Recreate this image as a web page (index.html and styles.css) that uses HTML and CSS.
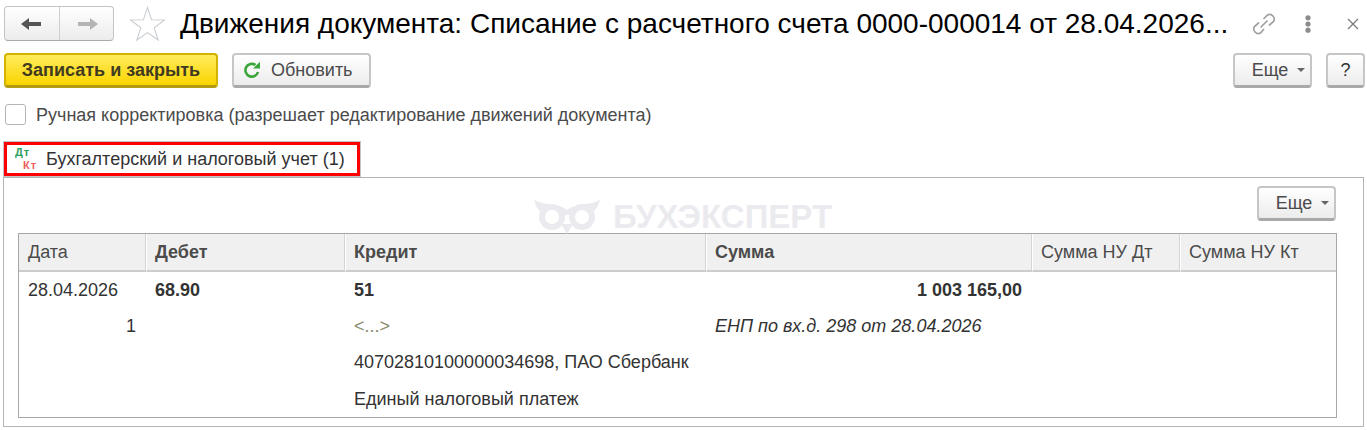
FILE: index.html
```html
<!DOCTYPE html>
<html lang="ru">
<head>
<meta charset="utf-8">
<title>Движения документа</title>
<link rel="stylesheet" href="styles.css">
</head>
<body>

<div class="titlebar">
  <div class="navgroup">
    <div class="navbtn navbtn-first">
      <svg width="24" height="16" viewBox="0 0 24 16"><path d="M1 8 L9 2 V6 H21 V10 H9 V14 Z" fill="#555"/></svg>
    </div>
    <div class="navbtn">
      <svg width="24" height="16" viewBox="0 0 24 16"><path d="M23 8 L15 2 V6 H3 V10 H15 V14 Z" fill="#b4b4b4"/></svg>
    </div>
  </div>
  <svg class="star" width="37" height="36" viewBox="0 0 37 36"><path d="M18.5 1.5 L22.6 13.8 L35.5 14 L25.2 21.8 L29.2 34 L18.5 26.6 L7.8 34 L11.8 21.8 L1.5 14 L14.4 13.8 Z" fill="#fff" stroke="#c9cdd1" stroke-width="1.1"/></svg>
  <h1 class="title">Движения документа: Списание с расчетного счета 0000-000014 от 28.04.2026...</h1>
  <div class="winicons">
    <svg width="24" height="24" viewBox="0 0 24 24" fill="none" stroke="#a0a0a0" stroke-width="1.7" stroke-linecap="round"><path d="M12 6.5 L15.5 3 A4.6 4.6 0 0 1 21.5 9.5 L17.5 13"/><path d="M11.5 17.5 L8.5 21 A4.6 4.6 0 0 1 2.5 14.5 L6.5 11"/><path d="M9 15 L15 9"/></svg>
    <svg class="dots" width="8" height="18" viewBox="0 0 8 18"><circle cx="4" cy="2.8" r="2.6" fill="#8c8c8c"/><circle cx="4" cy="9" r="2.6" fill="#8c8c8c"/><circle cx="4" cy="15.2" r="2.6" fill="#8c8c8c"/></svg>
    <svg class="close" width="12" height="12" viewBox="0 0 12 12"><path d="M1 1 L11 11 M11 1 L1 11" stroke="#777" stroke-width="1.2"/></svg>
  </div>
</div>

<div class="cmdbar">
  <button class="btn btn-main">Записать и закрыть</button>
  <button class="btn btn-refresh">
    <svg width="18" height="18" viewBox="0 0 18 18" fill="none"><path d="M15 11 A6.4 6.4 0 1 1 12.5 4" stroke="#3aa63a" stroke-width="2.6"/><path d="M10 7.5 H17 V0.8 Z" fill="#3aa63a"/></svg>
    Обновить
  </button>
  <div class="spacer"></div>
  <button class="btn btn-more">Еще <span class="caret"></span></button>
  <button class="btn btn-help">?</button>
</div>

<div class="checkrow">
  <span class="checkbox"></span>
  <span class="checklabel">Ручная корректировка (разрешает редактирование движений документа)</span>
</div>

<div class="tabrow">
  <div class="tab">
    <svg class="tabicon" width="26" height="28" viewBox="0 0 26 28"><text x="0" y="11" class="dt">Дт</text><text x="8" y="23.5" class="kt">Кт</text></svg>
    Бухгалтерский и налоговый учет (1)
  </div>
</div>

<div class="panel">
  <div class="watermark">
    <svg width="68" height="34" viewBox="0 0 68 34"><path d="M1 0 C12 6 24 2 34 10 C44 2 56 6 67 0 C65 8 61 13 54 15 L14 15 C7 13 3 8 1 0 Z M28 24 L40 24 L34 34 Z" fill="#ebebef"/><circle cx="19" cy="17" r="10" fill="#fff" stroke="#ebebef" stroke-width="6"/><circle cx="49" cy="17" r="10" fill="#fff" stroke="#ebebef" stroke-width="6"/></svg>
    <span>БУХЭКСПЕРТ</span>
  </div>
  <div class="panelbar">
    <button class="btn btn-more">Еще <span class="caret"></span></button>
  </div>
  <div class="grid">
    <div class="head">Дата</div>
    <div class="head bold">Дебет</div>
    <div class="head bold">Кредит</div>
    <div class="head bold">Сумма</div>
    <div class="head">Сумма НУ Дт</div>
    <div class="head">Сумма НУ Кт</div>

    <div class="cell">28.04.2026</div>
    <div class="cell bold">68.90</div>
    <div class="cell bold">51</div>
    <div class="cell bold right">1 003 165,00</div>
    <div class="cell"></div>
    <div class="cell"></div>

    <div class="cell right">1</div>
    <div class="cell"></div>
    <div class="cell empty">&lt;...&gt;</div>
    <div class="cell italic">ЕНП по вх.д. 298 от 28.04.2026</div>
    <div class="cell"></div>
    <div class="cell"></div>

    <div class="cell"></div>
    <div class="cell"></div>
    <div class="cell">40702810100000034698, ПАО Сбербанк</div>
    <div class="cell"></div>
    <div class="cell"></div>
    <div class="cell"></div>

    <div class="cell"></div>
    <div class="cell"></div>
    <div class="cell">Единый налоговый платеж</div>
    <div class="cell"></div>
    <div class="cell"></div>
    <div class="cell"></div>
  </div>
</div>

</body>
</html>
```

FILE: styles.css
```css
html, body {
	margin: 0;
	padding: 0;
	background: #fff;
}
body {
	width: 1367px;
	height: 430px;
	overflow: hidden;
	font-family: "Liberation Sans", Arial, sans-serif;
	font-size: 18px;
	color: #4b4b4b;
}

/* title line */
.titlebar {
	display: flex;
	align-items: center;
	height: 44px;
	padding: 3px 0 0 4px;
	box-sizing: border-box;
}
.navgroup {
	display: flex;
	width: 110px;
	height: 35px;
	box-sizing: border-box;
	border: 1px solid #c4c4c4;
	border-bottom-color: #aaa;
	border-radius: 4px;
	background: linear-gradient(#fff, #ececec);
}
.navbtn {
	flex: 1;
	display: flex;
	align-items: center;
	justify-content: center;
}
.navbtn-first {
	flex: 0 0 54px;
	border-right: 1px solid #cfcfcf;
}
.star {
	margin-left: 15px;
}
.title {
	margin: 0 0 0 14px;
	width: 1052px;
	font-weight: normal;
	font-size: 28px;
	line-height: 40px;
	color: #000;
	white-space: nowrap;
}
.winicons {
	display: flex;
	align-items: center;
	margin-left: 20px;
}
.dots {
	margin-left: 28px;
}
.close {
	margin-left: 35px;
}

/* buttons */
.cmdbar {
	display: flex;
	height: 35px;
	padding: 9px 2px 0 4px;
}
.spacer {
	flex: 1;
}
.btn {
	display: flex;
	align-items: center;
	justify-content: center;
	box-sizing: border-box;
	height: 35px;
	padding: 0;
	font-family: inherit;
	font-size: 18px;
	color: #4b4b4b;
	border: 2px solid #c6c6c6;
	border-bottom-width: 3px;
	border-bottom-color: #a9a9a9;
	border-radius: 4px;
	background: linear-gradient(#fff, #ececec);
}
.btn-main {
	width: 214px;
	margin-right: 14px;
	font-weight: bold;
	color: #3f3a20;
	border-color: #d3b300;
	border-bottom-color: #b39a10;
	background: linear-gradient(#ffec5c, #fad400);
}
.btn-refresh {
	width: 139px;
	gap: 10px;
	justify-content: flex-start;
	padding-left: 9px;
}
.btn-more {
	width: 79px;
	margin-right: 14px;
	padding-left: 12px;
}
.btn-help {
	width: 39px;
	color: #333;
}
.caret {
	width: 0;
	height: 0;
	margin-left: 9px;
	border-left: 4px solid transparent;
	border-right: 4px solid transparent;
	border-top: 4px solid #666;
}

/* checkbox */
.checkrow {
	display: flex;
	align-items: center;
	gap: 10px;
	height: 21px;
	margin-top: 16px;
	padding-left: 5px;
}
.checkbox {
	width: 21px;
	height: 21px;
	box-sizing: border-box;
	border: 1px solid #b5b5b5;
	border-radius: 3px;
}
.checklabel {
	padding-top: 2px;
}

/* tab */
.tab {
	display: flex;
	align-items: center;
	box-sizing: border-box;
	width: 356px;
	height: 34px;
	padding-left: 8px;
	border: 3px solid #f00;
	box-shadow: 0 0 0 1px #c4c4c4;
	color: #333;
}
.tabrow {
	display: flex;
	margin-top: 17px;
	padding-left: 4px;
}
.tabicon {
	margin-right: 5px;
	font-size: 11px;
	font-weight: bold;
	letter-spacing: 1px;
}
.dt {
	fill: #2ea05a;
}
.kt {
	fill: #ef5c5c;
}

/* panel with table */
.panel {
	position: relative;
	box-sizing: border-box;
	width: 1361px;
	height: 250px;
	margin: 1px 0 0 3px;
	padding: 8px 14px 0;
	border: 1px solid #b4b4b4;
}
.panelbar {
	display: flex;
	justify-content: flex-end;
	height: 35px;
	margin-bottom: 12px;
}
.panelbar .btn-more {
	margin-right: 13px;
}
.watermark {
	position: absolute;
	left: 529px;
	top: 20px;
	display: flex;
	align-items: center;
	gap: 12px;
	font-size: 33px;
	font-weight: bold;
	color: #ebebef;
	white-space: nowrap;
}
.grid {
	display: grid;
	grid-template-columns: 127px 199px 361px 326px 148px 156px;
	grid-template-rows: 38px 36px 36px 37px 36px;
	box-sizing: border-box;
	width: 1319px;
	height: 185px;
	border: 1px solid #a6a6a6;
}
.head {
	display: flex;
	align-items: center;
	padding-left: 9px;
	background: #f0f0f0;
	border-right: 1px solid #d4d4d4;
	border-bottom: 2px solid #ccc;
}
.head + .head {
	padding-left: 8px;
	border-left: 1px solid #fff;
}
.head:nth-child(6) {
	border-right: 0;
}
.cell {
	display: flex;
	align-items: center;
	min-width: 0;
	padding: 0 9px;
	white-space: nowrap;
	color: #333;
}
.bold {
	font-weight: bold;
}
.right {
	justify-content: flex-end;
	padding-right: 10px;
}
.italic {
	font-style: italic;
}
.empty {
	color: #8a8a6a;
}
```
